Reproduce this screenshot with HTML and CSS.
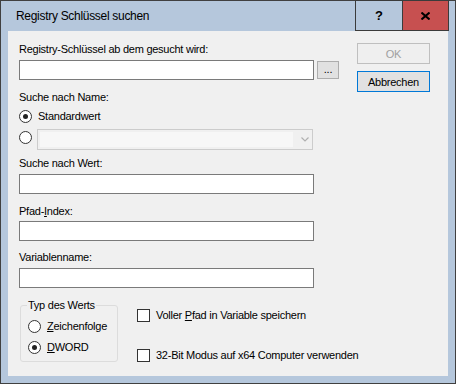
FILE: index.html
```html
<!DOCTYPE html>
<html lang="de">
<head>
<meta charset="utf-8">
<title>Registry Schlüssel suchen</title>
<link rel="stylesheet" href="styles.css">
</head>
<body>
<div class="window">
  <div class="titlebar">
    <span class="title">Registry Schlüssel suchen</span>
    <div class="caption-btns">
      <div class="cap help">?</div>
      <div class="cap close">
        <svg width="9" height="8" viewBox="0 0 9 8"><path d="M0.5 0.5 L8.5 7.5 M8.5 0.5 L0.5 7.5" stroke="#000" stroke-width="2" fill="none"/></svg>
      </div>
    </div>
  </div>
  <div class="client">
    <div class="top">
      <div class="fields">
        <div class="label">Registry-Schlüssel ab dem gesucht wird:</div>
        <div class="row-input">
          <div class="textbox"></div>
          <div class="btn browse">...</div>
        </div>
        <div class="label l-name">Suche nach Name:</div>
        <div class="radio-row r1"><span class="radio checked"></span><span>Standardwert</span></div>
        <div class="radio-row r2">
          <span class="radio"></span>
          <div class="combo">
            <div class="combo-text"></div>
            <div class="combo-arrow">
              <svg width="8" height="5" viewBox="0 0 8 5"><path d="M0.5 0.5 L4 4 L7.5 0.5" stroke="#b0b0b0" stroke-width="1.2" fill="none"/></svg>
            </div>
          </div>
        </div>
        <div class="label l-value">Suche nach Wert:</div>
        <div class="textbox t-value"></div>
        <div class="label l-path">Pfad-<u>I</u>ndex:</div>
        <div class="textbox t-path"></div>
        <div class="label l-var">Variablenname:</div>
        <div class="textbox t-var"></div>
      </div>
      <div class="buttons">
        <div class="btn ok">OK</div>
        <div class="btn cancel">Abbrechen</div>
      </div>
    </div>
    <div class="bottom">
      <fieldset class="group">
        <legend>Typ des Werts</legend>
        <div class="radio-row g1"><span class="radio"></span><span><u>Z</u>eichenfolge</span></div>
        <div class="radio-row g2"><span class="radio checked"></span><span><u>D</u>WORD</span></div>
      </fieldset>
      <div class="checks">
        <div class="check-row"><span class="checkbox"></span><span>Voller <u>P</u>fad in Variable speichern</span></div>
        <div class="check-row"><span class="checkbox"></span><span>32-Bit Modus auf x64 Computer verwenden</span></div>
      </div>
    </div>
  </div>
</div>
</body>
</html>
```

FILE: styles.css
```css
html, body {
  margin: 0;
  padding: 0;
  background: #ffffff;
}

.window {
  width: 456px;
  height: 384px;
  box-sizing: border-box;
  border: 1px solid #404040;
  border-top: none;
  background: #b5c7dc;
  display: flex;
  flex-direction: column;
  font-family: "Liberation Sans", Arial, sans-serif;
  font-size: 11px;
  letter-spacing: -0.25px;
  color: #000;
}

.titlebar {
  height: 31px;
  box-sizing: border-box;
  border-top: 1px solid #404040;
  display: flex;
  align-items: flex-start;
  padding-left: 15px;
  padding-right: 6px;
  flex-shrink: 0;
}

.title {
  flex: 1;
  font-size: 12px;
  letter-spacing: -0.3px;
  line-height: 30px;
  white-space: nowrap;
}

.caption-btns {
  display: flex;
  margin-top: -1px;
}

.cap {
  width: 47px;
  height: 31px;
  box-sizing: border-box;
  border: 1px solid #3b3b3b;
  display: flex;
  align-items: center;
  justify-content: center;
}

.help {
  border-right: none;
  font-weight: bold;
  font-size: 13px;
  letter-spacing: 0;
}

.close {
  background: #c75050;
}

.client {
  margin: 0 7px 7px 7px;
  height: 345px;
  box-sizing: border-box;
  background: #f0f0f0;
  padding: 12px 0 0 11px;
  flex-shrink: 0;
}

.top {
  display: flex;
  align-items: flex-start;
}

.fields {
  width: 320px;
  display: flex;
  flex-direction: column;
}

.label {
  height: 13px;
  line-height: 13px;
  white-space: nowrap;
}

.row-input {
  display: flex;
  align-items: flex-start;
  gap: 3px;
  margin-top: 4px;
}

.textbox {
  width: 295px;
  height: 20px;
  box-sizing: border-box;
  border: 1px solid #7a7a7a;
  background: #ffffff;
}

.btn {
  box-sizing: border-box;
  border: 1px solid #adadad;
  background: #e1e1e1;
  display: flex;
  align-items: center;
  justify-content: center;
  white-space: nowrap;
}

.browse {
  width: 22px;
  height: 18px;
  margin-top: 1px;
  line-height: 13px;
  padding-bottom: 2px;
}

.l-name { margin-top: 11px; }

.radio-row {
  display: flex;
  align-items: center;
  gap: 6px;
  height: 13px;
  line-height: 13px;
  white-space: nowrap;
}

.r1 { margin-top: 6px; }

.r2 {
  margin-top: 6px;
  height: 21px;
  align-items: flex-start;
  gap: 5px;
}

.r2 .radio { margin-top: 2px; }

.radio {
  width: 13px;
  height: 13px;
  box-sizing: border-box;
  border: 1px solid #333333;
  border-radius: 50%;
  background: #ffffff;
  display: flex;
  align-items: center;
  justify-content: center;
  flex-shrink: 0;
}

.radio.checked::after {
  content: "";
  width: 5px;
  height: 5px;
  border-radius: 50%;
  background: #222222;
}

.combo {
  width: 276px;
  height: 21px;
  box-sizing: border-box;
  border: 1px solid #cccccc;
  background: #f0f0f0;
  padding: 2px 0 2px 2px;
  display: flex;
}

.combo-text {
  flex: 1;
  background: #f7f7f7;
}

.combo-arrow {
  width: 19px;
  display: flex;
  align-items: center;
  justify-content: flex-end;
  padding-right: 3px;
  box-sizing: border-box;
}

.l-value { margin-top: 7px; }
.t-value { margin-top: 4px; }
.l-path { margin-top: 11px; }
.t-path { margin-top: 3px; }
.l-var { margin-top: 10px; }
.t-var { margin-top: 4px; }

.buttons {
  margin-left: 18px;
  display: flex;
  flex-direction: column;
}

.ok {
  width: 73px;
  height: 21px;
  border-color: #bfbfbf;
  background: #efefef;
  color: #a0a0a0;
}

.cancel {
  width: 73px;
  height: 21px;
  margin-top: 7px;
  border-color: #0078d7;
}

.bottom {
  display: flex;
  align-items: flex-start;
  margin-top: 11px;
}

.group {
  margin: 0 0 0 1px;
  width: 98px;
  min-width: 0;
  box-sizing: border-box;
  border: 1px solid #dcdcdc;
  border-radius: 3px;
  padding: 8px 0 7px 7px;
  display: flex;
  flex-direction: column;
}

.group legend {
  padding: 0 1px;
  margin-left: -1px;
  line-height: 13px;
  height: 13px;
  white-space: nowrap;
}

.g2 { margin-top: 8px; }

.checks {
  margin-left: 19px;
  padding-top: 10px;
  display: flex;
  flex-direction: column;
  gap: 27px;
}

.check-row {
  display: flex;
  align-items: center;
  gap: 6px;
  height: 13px;
  line-height: 13px;
  white-space: nowrap;
}

.checkbox {
  width: 13px;
  height: 13px;
  box-sizing: border-box;
  border: 1px solid #333333;
  background: #ffffff;
  flex-shrink: 0;
}
```
